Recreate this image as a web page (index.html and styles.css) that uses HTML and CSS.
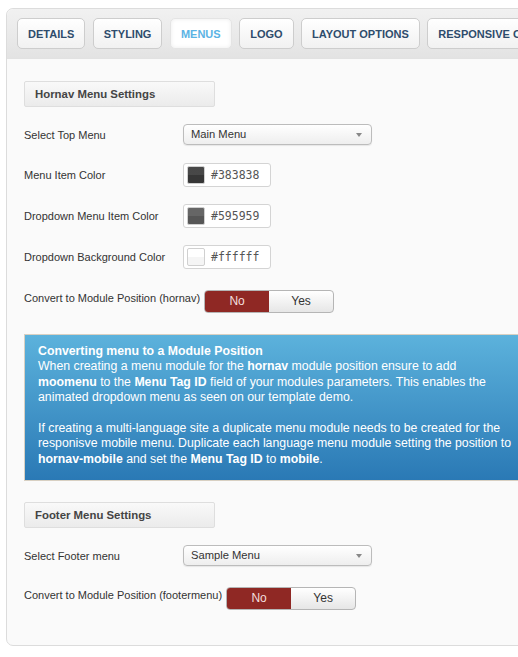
FILE: index.html
```html
<!DOCTYPE html>
<html lang="en">
<head>
    <meta charset="UTF-8">
    <meta name="viewport" content="width=device-width, initial-scale=1.0">
    <title>Template Options | Menus</title>
    <link rel="stylesheet" href="styles.css">
</head>
<body>
    <div class="panel">
        <ul class="tabs">
            <li><a href="#">Details</a></li>
            <li><a href="#">Styling</a></li>
            <li class="active"><a href="#">Menus</a></li>
            <li><a href="#">Logo</a></li>
            <li><a href="#">Layout Options</a></li>
            <li><a href="#">Responsive Options</a></li>
        </ul>

        <div class="tab-content">
            <h3 class="section-title">Hornav Menu Settings</h3>

            <div class="row row-select">
                <label>Select Top Menu</label>
                <div class="select">Main Menu<span class="caret"></span></div>
            </div>
            <div class="row">
                <label>Menu Item Color</label>
                <div class="color-input"><span class="swatch" style="background-color:#383838"></span>#383838</div>
            </div>
            <div class="row">
                <label>Dropdown Menu Item Color</label>
                <div class="color-input"><span class="swatch" style="background-color:#595959"></span>#595959</div>
            </div>
            <div class="row row-last">
                <label>Dropdown Background Color</label>
                <div class="color-input"><span class="swatch" style="background-color:#ffffff"></span>#ffffff</div>
            </div>
            <div class="row row-toggle">
                <label>Convert to Module Position (hornav)</label>
                <div class="toggle">
                    <span class="on">No</span>
                    <span>Yes</span>
                </div>
            </div>

            <div class="info">
                <strong>Converting menu to a Module Position</strong><br>
                When creating a menu module for the <strong>hornav</strong> module position ensure to add <strong>moomenu</strong> to the <strong>Menu Tag ID</strong> field of your modules parameters. This enables the animated dropdown menu as seen on our template demo.<br><br>
                If creating a multi-language site a duplicate menu module needs to be created for the responisve mobile menu. Duplicate each language menu module setting the position to <strong>hornav-mobile</strong> and set the <strong>Menu Tag ID</strong> to <strong>mobile</strong>.
            </div>

            <h3 class="section-title">Footer Menu Settings</h3>

            <div class="row row-select row-last">
                <label>Select Footer menu</label>
                <div class="select">Sample Menu<span class="caret"></span></div>
            </div>
            <div class="row row-toggle">
                <label>Convert to Module Position (footermenu)</label>
                <div class="toggle">
                    <span class="on">No</span>
                    <span>Yes</span>
                </div>
            </div>
        </div>
    </div>
</body>
</html>
```

FILE: styles.css
```css
body {
    font-family: "Liberation Sans", Arial, sans-serif;
    font-size: 11px;
    color: #333;
    margin: 0;
    padding: 0;
    background: #fff;
    overflow: hidden;
}

.panel {
    margin: 8px 0 0 6px;
    width: 620px;
    border: 1px solid #dcdcdc;
    border-radius: 7px;
    background: #fafafa;
}

/* tab strip */
.tabs {
    list-style: none;
    margin: 0;
    padding: 9px 0 9px 10px;
    display: flex;
    gap: 7.5px;
    white-space: nowrap;
    background: linear-gradient(#f1f1f1, #e3e3e3);
    border-bottom: 1px solid #e2e2e2;
    border-radius: 7px 7px 0 0;
}

.tabs li a {
    display: block;
    height: 29px;
    line-height: 30px;
    padding: 0 10px;
    border: 1px solid #cdcdcd;
    border-radius: 5px;
    background: linear-gradient(#ffffff, #f1f1f1);
    color: #2e4c6c;
    font-size: 11px;
    font-weight: bold;
    letter-spacing: 0;
    text-transform: uppercase;
    text-decoration: none;
}

.tabs li.active a {
    background: #fff;
    border-color: #e4e4e4;
    color: #5bb3e4;
    box-shadow: inset 0 0 4px rgba(0, 0, 0, 0.08);
}

.tab-content {
    padding: 22px 17px 35px;
}

.section-title {
    width: 179px;
    height: 24px;
    line-height: 25px;
    margin: 0 0 17px;
    padding: 0 0 0 10px;
    border: 1px solid #dedede;
    border-radius: 2px;
    background: linear-gradient(#f9f9f9, #ebebeb);
    color: #444;
    font-size: 11.4px;
    font-weight: bold;
}

/* form rows */
.row {
    display: flex;
    align-items: center;
    margin-bottom: 17px;
}

.row-select {
    margin-bottom: 18px;
}

.row-last {
    margin-bottom: 21px;
}

.row:last-child {
    margin-bottom: 0;
}

.row label {
    min-width: 159px;
    padding-right: 4px;
    box-sizing: border-box;
}

.row-toggle {
    align-items: flex-start;
}

.row-toggle label {
    padding-top: 2px;
}

.select {
    position: relative;
    width: 180px;
    height: 19px;
    line-height: 19px;
    padding-left: 7px;
    border: 1px solid #bcbcbc;
    border-radius: 4px;
    background: linear-gradient(#ffffff, #eeeeee);
    box-shadow: 0 1px 1px rgba(0, 0, 0, 0.08);
    color: #333;
    font-size: 11.2px;
}

.caret {
    position: absolute;
    right: 9px;
    top: 8px;
    border-left: 3px solid transparent;
    border-right: 3px solid transparent;
    border-top: 4px solid #888;
}

.color-input {
    display: flex;
    align-items: center;
    width: 86px;
    height: 22px;
    border: 1px solid #d4d4d4;
    border-radius: 3px;
    background: #fff;
    font-family: "DejaVu Sans Mono", monospace;
    font-size: 11.5px;
    color: #555;
}

.swatch {
    width: 16px;
    height: 16px;
    margin: 0 6px 0 3px;
    border: 1px solid #d0d0d0;
    border-radius: 2px;
    background-image: linear-gradient(rgba(255, 255, 255, 0.08) 50%, rgba(0, 0, 0, 0.04) 50%);
}

.toggle {
    display: flex;
    width: 128px;
    height: 21px;
    border: 1px solid #b5b5b5;
    border-radius: 4px;
    overflow: hidden;
    background: linear-gradient(#ffffff, #e6e6e6);
    font-size: 12px;
}

.toggle span {
    flex: 1;
    text-align: center;
    line-height: 21px;
    color: #333;
}

.toggle span.on {
    background: #8f2824;
    color: #f3dede;
}

.info {
    width: 474px;
    margin: 21px 0 21px;
    padding: 9px 13px 13px;
    border: 1px solid #d8d0c2;
    background: linear-gradient(#5cb2dc, #2a79b5);
    color: #fff;
    font-size: 12.3px;
    line-height: 15.4px;
}
```
